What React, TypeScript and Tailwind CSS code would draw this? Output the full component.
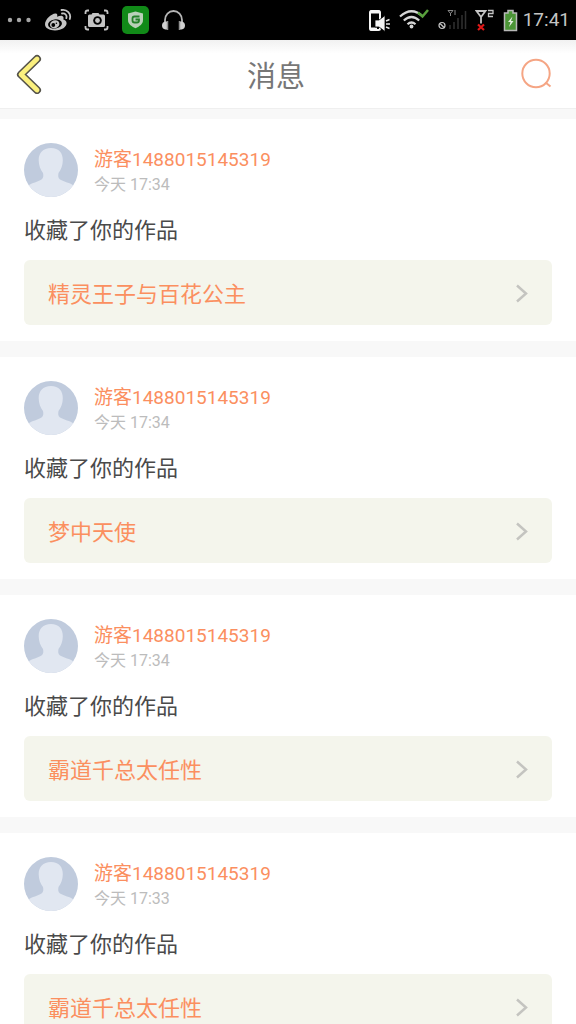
const messages = [
  { id: 1, user: "游客1488015145319", time: "今天 17:34", text: "收藏了你的作品", work: "精灵王子与百花公主" },
  { id: 2, user: "游客1488015145319", time: "今天 17:34", text: "收藏了你的作品", work: "梦中天使" },
  { id: 3, user: "游客1488015145319", time: "今天 17:34", text: "收藏了你的作品", work: "霸道千总太任性" },
  { id: 4, user: "游客1488015145319", time: "今天 17:33", text: "收藏了你的作品", work: "霸道千总太任性" },
];

function StatusBar() {
  return (
    <div className="flex h-10 items-center justify-between bg-black px-1.5 text-[#c4c4c4]">
      <div className="flex items-center gap-3">
        {/* more */}
        <svg width="26" height="28" viewBox="0 0 26 28" fill="#a6a6a6">
          <circle cx="4" cy="14" r="2.200" />
          <circle cx="13" cy="14" r="2.200" />
          <circle cx="22.500" cy="14" r="2.200" />
        </svg>
        {/* weibo */}
        <svg width="28" height="28" viewBox="0 0 28 28" fill="none">
          <path
            d="M11.500 7.500C7 7.800 1 13.500 1 18.300c0 4 4.600 6.200 10 6.200 7 0 11.600-3.800 11.600-7.200 0-2-1.500-3.200-3.300-3.700.6-1.900.3-3.300-1.200-3.700-1.300-.4-3.300.1-5 .8.500-1.800.3-3.300-1.600-3.200z"
            fill="#c4c4c4"
          />
          <ellipse cx="11" cy="18" rx="7" ry="4.600" fill="#000" transform="rotate(-8 11 18)" />
          <ellipse cx="10.700" cy="18.300" rx="4.800" ry="4" fill="#c4c4c4" transform="rotate(-20 10.700 18.300)" />
          <circle cx="9.300" cy="19" r="1.900" fill="#000" />
          <circle cx="12.400" cy="17.300" r="0.800" fill="#000" />
          <path d="M18 7.500c3-.6 5.300 1.700 4.300 4.700M17.500 4c5.500-1 10 3.500 8.300 9" stroke="#c4c4c4" strokeWidth="1.800" strokeLinecap="round" />
        </svg>
        {/* screenshot */}
        <svg width="26" height="28" viewBox="0 0 26 28" fill="none">
          <path d="M1.500 8V6.500q0-2 2-2h1.500M20 4.500h1.500q2 0 2 2V8M23.500 20v1.500q0 2-2 2H20M5 23.500H3.500q-2 0-2-2V20" stroke="#c4c4c4" strokeWidth="1.800" />
          <path d="M5.500 8.500h2l1-1.500h6l1 1.500h4q1.500 0 1.500 1.500v9.500q0 1.500-1.500 1.500h-14Q4 21 4 19.500V10q0-1.500 1.500-1.500z" fill="#c4c4c4" />
          <circle cx="13.500" cy="14.500" r="4.300" fill="#000" />
          <circle cx="13.500" cy="14.500" r="2.400" fill="#c4c4c4" />
        </svg>
        {/* guard */}
        <svg width="28" height="28" viewBox="0 0 28 28" fill="none">
          <rect width="27" height="28" rx="5" fill="#118a18" />
          <path d="M13.500 5.500l7.500 2v6.500c0 4-3.300 6.300-7.500 8.300C9.300 20.300 6 18 6 14V7.500z" fill="#b9d0b8" />
          <path d="M17.500 10.500h-5q-2 0-2 2v2q0 2 2 2h2.500q2 0 2-2v-1h-3.500" stroke="#25802a" strokeWidth="1.800" />
        </svg>
        {/* headset */}
        <svg width="26" height="28" viewBox="0 0 26 28" fill="none">
          <path d="M3 17.500V14a8.500 9 0 0 1 17 0v3.500" stroke="#b5b5b5" strokeWidth="1.800" />
          <path d="M5 15.500v8H3.500Q0 23 0 19.500t3.500-4zM18 15.500v8h1.500q3.500-.5 3.500-4t-3.500-4z" fill="#d0d0d0" />
          <path d="M5.500 15v9M17.500 15v9" stroke="#909090" strokeWidth="1.500" />
        </svg>
      </div>
      <div className="flex items-center gap-2">
        {/* phone sound */}
        <svg width="24" height="28" viewBox="0 0 24 28" fill="none">
          <rect x="3" y="5" width="10" height="19" rx="1.500" stroke="#f4f4f4" strokeWidth="2" />
          <path d="M3 6h10M3 23h7" stroke="#f4f4f4" strokeWidth="3" />
          <path d="M8 14h4l6-4.500v16L12 21H8z" fill="#f4f4f4" stroke="#000" strokeWidth="0.800" />
          <path d="M19 15l3.500-1.500M19 18h4M19 21l3.500 1.500" stroke="#e8e8e8" strokeWidth="1.400" />
        </svg>
        {/* wifi */}
        <svg width="30" height="28" viewBox="0 0 30 28" fill="none">
          <path d="M1 10.500q11.500-10.500 23 0M4.800 14.500q7.700-7 15.400 0M8.500 18.300q4-3.600 8 0" stroke="#d6d6d6" strokeWidth="2.200" />
          <circle cx="12.500" cy="20.500" r="1.900" fill="#d6d6d6" />
          <path d="M19 6.500l4.500 4L29 4" stroke="#58a03c" strokeWidth="2.500" />
        </svg>
        {/* no signal */}
        <svg width="30" height="28" viewBox="0 0 30 28" fill="none">
          <circle cx="5" cy="19.500" r="3" stroke="#c4c4c4" strokeWidth="1.200" />
          <path d="M3 17.500l4 4" stroke="#c4c4c4" strokeWidth="1.200" />
          <path d="M11 4.500h5l-2.500 3zM13.500 7v3M18 4v5" stroke="#888" />
          <path d="M13 19v4M17 16v7M21 12v11M25 9v14M28.500 5v18" stroke="#303030" strokeWidth="1.500" />
        </svg>
        {/* second sim */}
        <svg width="20" height="28" viewBox="0 0 20 28" fill="none">
          <path d="M1.500 5h9L6 11zM6 10v7.500" stroke="#c4c4c4" strokeWidth="1.800" />
          <path d="M13 4.500h5V7.500h-4.500v3H18" stroke="#c4c4c4" strokeWidth="1.300" />
          <path d="M3 18.500l6 5.500M9 18.500L3 24" stroke="#e01818" strokeWidth="2.200" />
        </svg>
        <div className="flex items-center gap-1">
          {/* battery */}
          <svg width="16" height="28" viewBox="0 0 16 28" fill="none">
            <path d="M5 4.500h5V7h3.500v17.500h-12V7H5z" fill="#4b9436" stroke="#b8b8b8" strokeWidth="1.500" />
            <path d="M9.500 10.500L5 16h2.500l-1.500 5L10.500 15H8z" fill="#e6eee2" />
          </svg>
          <span className="text-[19px] leading-7">17:41</span>
        </div>
      </div>
    </div>
  );
}

function Avatar() {
  return (
    <svg className="size-[54px] shrink-0 rounded-full" viewBox="0 0 54 54">
      <rect width="54" height="54" fill="#c0cbdd" />
      <path
        d="M27 5c-8 0-12.500 5-12.300 12.500.1 5 1.600 9 4.300 12.500.6 3 .5 5-1.500 6.500C14 39 8 39.500 4 43v11h46V43c-4-3.500-10-4-14-6.500-2-1.500-2-3.500-1.500-6.500 2.700-3.500 4.200-7.500 4.300-12.500C39 10 35 5 27 5z"
        fill="#e1e7f1"
      />
    </svg>
  );
}

export default function App() {
  return (
    <div className="h-screen overflow-hidden bg-[#f8f8f8] font-['Roboto','Noto_Sans_CJK_SC',sans-serif]">
      <StatusBar />
      <header className="flex h-[69px] items-center justify-between border-b border-[#efefef] bg-white bg-linear-to-b from-[#f1f1f1] to-white to-20% pl-4 pr-6">
        <button type="button" aria-label="返回" className="w-7">
          <svg width="28" height="40" viewBox="0 0 28 40" fill="none" strokeLinecap="round" strokeLinejoin="round">
            <path d="M21 5L5 20.500 21 36" stroke="#55534a" strokeWidth="8" />
            <path d="M21 5L5 20.500 21 36" stroke="#fbf07e" strokeWidth="4.800" />
          </svg>
        </button>
        <h1 className="pt-2 text-[29px] text-[#777]">消息</h1>
        <button type="button" aria-label="搜索" className="flex w-11 justify-end">
          <svg width="32" height="32" viewBox="0 0 32 32" fill="none" stroke="#f5a584" strokeWidth="2">
            <circle cx="16" cy="15.500" r="13.700" />
            <path d="M25.500 24.500l5 4" />
          </svg>
        </button>
      </header>

      <main className="mt-2.5 flex flex-col gap-4">
        {messages.map((message) => (
          <article key={message.id} className="bg-white px-6 pt-6 pb-4">
            <div className="flex items-center gap-4">
              <Avatar />
              <div className="pt-1">
                <p className="text-[19px] leading-[26px] text-[#fb8f5f]">{message.user}</p>
                <p className="text-base leading-6 text-[#bcbcbc]">{message.time}</p>
              </div>
            </div>
            <p className="mt-[18px] text-[22px] leading-8 text-[#4a4a4a]">{message.text}</p>
            <a
              href="#"
              className="mt-[13px] flex h-[65px] items-center justify-between rounded-md bg-[#f4f5ec] px-6 pt-[3px] text-[22px] text-[#fb8f5f]"
            >
              {message.work}
              <svg width="12" height="20" viewBox="0 0 12 20" fill="none" stroke="#c4c4c0" strokeWidth="2.500">
                <path d="M1 1.500l9 8-9 8" />
              </svg>
            </a>
          </article>
        ))}
      </main>
    </div>
  );
}
